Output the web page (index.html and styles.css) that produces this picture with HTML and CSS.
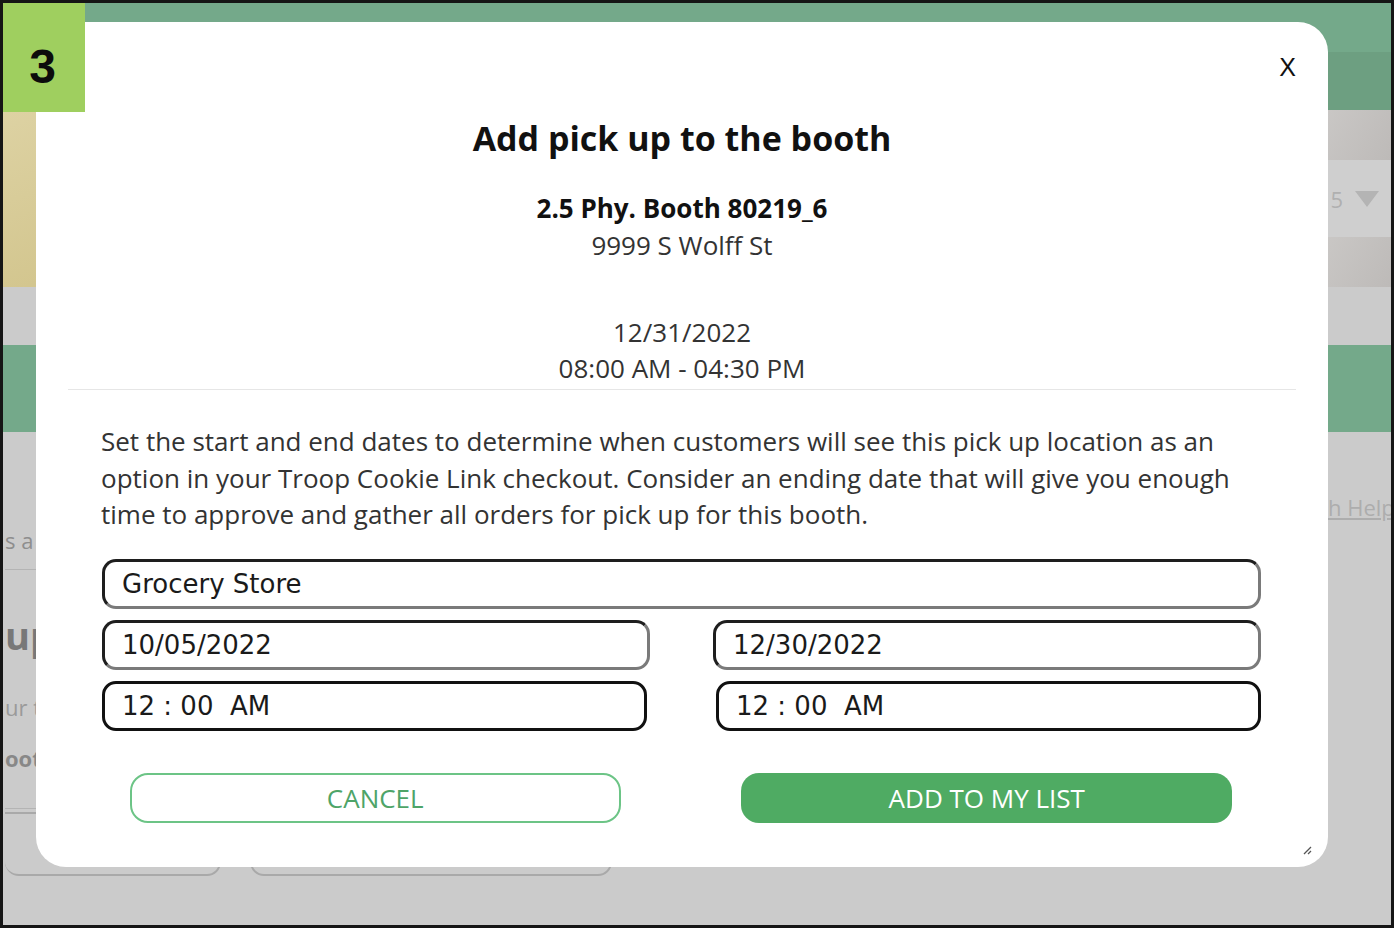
FILE: index.html
```html
<!DOCTYPE html>
<html lang="en">
<head>
    <meta charset="UTF-8">
    <meta name="viewport" content="width=device-width, initial-scale=1.0">
    <title>Add pick up to the booth</title>
    <link rel="stylesheet" href="styles.css">
</head>
<body>
    <div class="screen">
        <!-- page behind the dialog -->
        <div class="page">
            <header class="topbar"></header>
            <nav class="subnav"></nav>
            <section class="hero">
                <div class="hero-photo"></div>
                <div class="hero-side">
                    <div class="feather"></div>
                    <div class="picker"><span class="picker-value">5</span><span class="caret"></span></div>
                    <div class="feather"></div>
                </div>
            </section>
            <div class="hero-gap"></div>
            <section class="band"></section>
            <section class="content">
                <div class="content-main">
                    <p class="intro">s a</p>
                    <h2 class="section-title">up</h2>
                    <p class="section-text">ur t</p>
                    <p class="section-strong">oot</p>
                    <div class="card-row">
                        <div class="card card-small"></div>
                        <div class="card card-wide"></div>
                    </div>
                </div>
                <div class="help-col"><a class="help-link">h Help</a></div>
            </section>
        </div>

        <div class="modal">
            <button class="close-btn">X</button>

            <div class="modal-header">
                <h1>Add pick up to the booth</h1>
                <div class="booth-name">2.5 Phy. Booth 80219_6</div>
                <div class="booth-address">9999 S Wolff St</div>
                <div class="booth-date">12/31/2022</div>
                <div class="booth-time">08:00 AM - 04:30 PM</div>
            </div>

            <div class="divider"></div>

            <div class="modal-body">
                <p class="hint">Set the start and end dates to determine when customers will see this pick up location as an option in your Troop Cookie Link checkout. Consider an ending date that will give you enough time to approve and gather all orders for pick up for this booth.</p>

                <div class="fields">
                    <input class="field field-full" type="text" value="Grocery Store">
                    <input class="field" type="text" value="10/05/2022">
                    <input class="field" type="text" value="12/30/2022">
                    <input class="field field-time field-time-left" type="text" value="12 : 00  AM">
                    <input class="field field-time field-time-right" type="text" value="12 : 00  AM">
                </div>

                <div class="actions">
                    <button class="btn btn-cancel">CANCEL</button>
                    <button class="btn btn-add">ADD TO MY LIST</button>
                </div>
            </div>

            <svg class="grip" width="9" height="9" viewBox="0 0 9 9">
                <path d="M1 8 L8 1 M5 8 L8 5" stroke="#555" stroke-width="1.3" fill="none"/>
            </svg>
        </div>

        <div class="step-badge">3</div>
    </div>
</body>
</html>
```

FILE: styles.css
```css
body {
    margin: 0;
    padding: 0;
    font-family: 'Open Sans', sans-serif;
    background: #cbcbcb;
}

.screen {
    position: relative;
    width: 1394px;
    height: 928px;
    box-sizing: border-box;
    border: 3px solid #151515;
    overflow: hidden;
    background: #cbcbcb;
}

.topbar {
    height: 49px;
    background: #74a98a;
}

.subnav {
    height: 58px;
    background: #6d9f81;
}

.hero {
    display: flex;
    height: 177px;
}

.hero-photo {
    flex: 1;
    background: linear-gradient(160deg, #ddd2a3 0%, #d3c68f 35%, #ddd4a8 60%, #d2c48b 100%);
}

.hero-side {
    width: 420px;
    display: flex;
    flex-direction: column;
}

.feather {
    height: 50px;
    background: linear-gradient(120deg, #a9a6a4 0%, #c6c3c1 30%, #b7b4b2 45%, #cfcdcb 70%, #bdbab8 100%);
}

.picker {
    flex: 1;
    display: flex;
    justify-content: flex-end;
    align-items: center;
    gap: 12px;
    padding-right: 12px;
    background: #cfcfcf;
    color: #b0b0b0;
    font-size: 22px;
}

.caret {
    width: 0;
    height: 0;
    border-left: 12px solid transparent;
    border-right: 12px solid transparent;
    border-top: 16px solid #b4b4b4;
}

.hero-gap {
    height: 58px;
}

.band {
    height: 87px;
    background: #74a98a;
}

.content {
    display: flex;
}

.content-main {
    flex: 1;
    padding-left: 2px;
}

.intro {
    margin: 93px 0 0;
    padding-bottom: 14px;
    border-bottom: 1px solid #b4b4b4;
    font-size: 22px;
    line-height: 30px;
    color: #8e8e8e;
}

.section-title {
    margin: 41px 0 0;
    font-size: 38px;
    line-height: 48px;
    color: #787878;
}

.section-text {
    margin: 33px 0 0;
    font-size: 22px;
    line-height: 30px;
    color: #9a9a9a;
}

.section-strong {
    margin: 21px 0 0;
    padding-bottom: 35px;
    border-bottom: 1px solid #b4b4b4;
    font-size: 22px;
    line-height: 30px;
    font-weight: 700;
    color: #888;
}

.card-row {
    display: flex;
    gap: 29px;
    margin-top: 3px;
}

.card {
    height: 60px;
    border: 2px solid #a9a9a9;
    border-radius: 0 0 14px 14px;
}

.card-small {
    width: 214px;
    border-left: none;
}

.card-wide {
    width: 358px;
}

.help-col {
    width: 63px;
    overflow: hidden;
    white-space: nowrap;
}

.help-link {
    display: block;
    margin-top: 60px;
    font-size: 22px;
    line-height: 30px;
    color: #adadad;
    text-decoration: underline;
}

/* step marker */
.step-badge {
    position: absolute;
    top: -3px;
    left: -3px;
    width: 85px;
    height: 112px;
    box-sizing: border-box;
    padding-top: 20px;
    display: flex;
    align-items: center;
    justify-content: center;
    background: #9fcf5f;
    font-family: 'Liberation Sans', Arial, sans-serif;
    font-weight: 700;
    font-size: 48px;
    color: #0c0c0c;
}

/* dialog */
.modal {
    position: absolute;
    left: 33px;
    top: 19px;
    width: 1292px;
    height: 845px;
    box-sizing: border-box;
    padding-top: 96px;
    background: #fff;
    border-radius: 30px;
}

.close-btn {
    position: absolute;
    top: 30px;
    right: 32px;
    padding: 0;
    border: none;
    background: none;
    font-family: 'Liberation Sans', Arial, sans-serif;
    font-size: 25px;
    line-height: 30px;
    color: #111;
    cursor: pointer;
}

.modal-header {
    text-align: center;
    color: #333;
}

.modal-header h1 {
    margin: 0;
    font-size: 34px;
    line-height: 40px;
    font-weight: 700;
    color: #111;
}

.booth-name {
    margin-top: 32px;
    font-size: 26px;
    line-height: 37px;
    font-weight: 700;
    color: #111;
}

.booth-address {
    font-size: 26px;
    line-height: 37px;
}

.booth-date {
    margin-top: 50px;
    font-size: 26px;
    line-height: 36px;
}

.booth-time {
    font-size: 26px;
    line-height: 36px;
}

.divider {
    margin: 3px 32px 0;
    border-top: 1px solid #e6e6e6;
}

.modal-body {
    padding: 0 67px 0 65px;
}

.hint {
    margin: 33px 0 0;
    font-size: 26px;
    line-height: 36.5px;
    color: #333;
}

.fields {
    display: grid;
    grid-template-columns: 1fr 1fr;
    column-gap: 63px;
    row-gap: 11px;
    margin-top: 26px;
    margin-left: 1px;
}

.field {
    height: 50px;
    box-sizing: border-box;
    padding: 0 17px;
    border: 3px solid #1e1e1e;
    border-right-color: #7a7a7a;
    border-bottom-color: #7a7a7a;
    border-radius: 14px;
    font-family: 'DejaVu Sans', Verdana, sans-serif;
    font-size: 26px;
    color: #1a1a1a;
    white-space: pre;
    outline: none;
}

.field-full {
    grid-column: 1 / 3;
}

.field-time {
    border-color: #111;
}

.field-time-left {
    margin-right: 3px;
}

.field-time-right {
    margin-left: 3px;
}

.actions {
    display: grid;
    grid-template-columns: 1fr 1fr;
    column-gap: 63px;
    margin-top: 42px;
}

.btn {
    justify-self: center;
    width: 491px;
    height: 50px;
    border-radius: 18px;
    font-family: 'Open Sans', sans-serif;
    font-size: 26px;
    cursor: pointer;
}

.btn-cancel {
    background: #fff;
    border: 2px solid #6cc486;
    color: #4ea468;
}

.btn-add {
    background: #4fab63;
    border: none;
    color: #fff;
}

.grip {
    position: absolute;
    right: 16px;
    bottom: 12px;
}
```
